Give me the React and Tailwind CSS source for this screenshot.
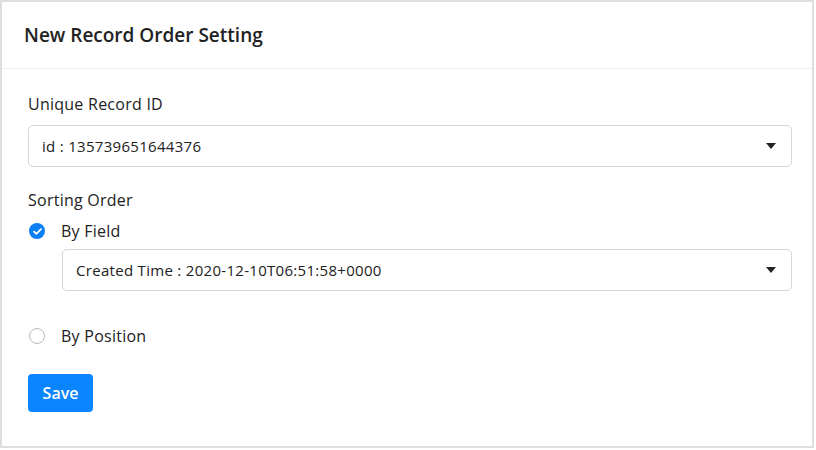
import { useState } from 'react';

const FONT = { fontFamily: '"Open Sans", "Liberation Sans", sans-serif' };

function Caret() {
  return (
    <svg width="10" height="6" viewBox="0 0 10 6" className="text-[#222]">
      <path d="M0 0 L10 0 L5 6 Z" fill="currentColor" />
    </svg>
  );
}

function SelectBox({ value, className = '' }) {
  return (
    <div className={`h-[42px] border border-[#d3d6db] rounded-[5px] flex items-center justify-between pl-[13px] pr-[15px] ${className}`}>
      <span className="text-[15px] tracking-[0.3px] text-[#222]">{value}</span>
      <Caret />
    </div>
  );
}

function Check({ on }) {
  if (on) {
    return (
      <div className="w-4 h-4 rounded-full bg-[#0b7ff5] flex items-center justify-center">
        <svg width="9" height="7" viewBox="0 0 9 7">
          <path d="M1 3.6 L3.4 5.8 L8 1.2" stroke="white" strokeWidth="1.8" fill="none" strokeLinecap="round" strokeLinejoin="round" />
        </svg>
      </div>
    );
  }
  return <div className="w-4 h-4 rounded-full border border-[#b5b9bf] bg-white" />;
}

export default function App() {
  const [mode, setMode] = useState('field');

  return (
    <div className="w-[816px] h-[450px] bg-white" style={FONT}>
      <div className="w-[814px] h-[448px] border-2 border-[#dedede] flex flex-col">
        {/* Header */}
        <div className="h-[67px] border-b border-[#eaf0f7] flex items-center px-[22px]">
          <h1 className="text-[19px] font-semibold text-[#222]">New Record Order Setting</h1>
        </div>

        {/* Body */}
        <div className="pl-[26px] pr-[20px] pt-[23px]">
          <p className="text-[16px] tracking-[0.25px] text-[#222] leading-6">Unique Record ID</p>
          <SelectBox value="id : 135739651644376" className="mt-[9px]" />

          <p className="text-[16px] tracking-[0.25px] text-[#222] leading-6 mt-[21px]">Sorting Order</p>

          <button onClick={() => setMode('field')} className="flex items-center gap-[16px] mt-[7px] pl-[1px]">
            <Check on={mode === 'field'} />
            <span className="text-[16px] tracking-[0.25px] text-[#222] leading-6">By Field</span>
          </button>
          <SelectBox value="Created Time : 2020-12-10T06:51:58+0000" className="ml-[34px] mt-[6px]" />

          <button onClick={() => setMode('position')} className="flex items-center gap-[16px] mt-[33px] pl-[1px]">
            <Check on={mode === 'position'} />
            <span className="text-[16px] tracking-[0.25px] text-[#222] leading-6">By Position</span>
          </button>

          <button className="mt-[26px] w-[65px] h-[38px] rounded-[4px] bg-[#0a84ff] text-white text-[16px] font-semibold">
            Save
          </button>
        </div>
      </div>
    </div>
  );
}
